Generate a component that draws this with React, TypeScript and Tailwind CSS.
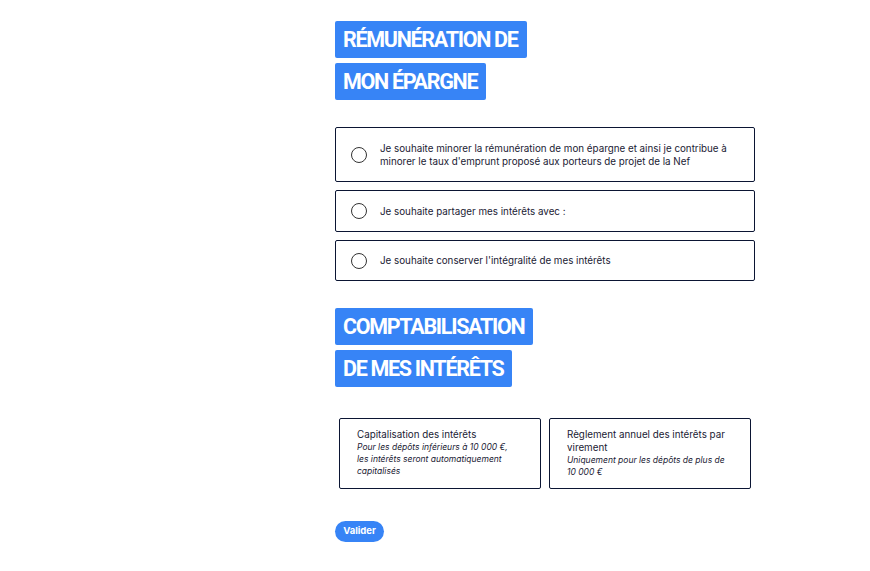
import React from "react";

const blue = "bg-[#3784f6]";

function Heading({ lines }: { lines: string[] }) {
  return (
    <div className="flex flex-col items-start gap-[5px]">
      {lines.map((l) => (
        <div
          key={l}
          className={`${blue} h-[37px] flex items-center pl-[8px] pr-[9px] rounded-[2px] text-white text-[21.5px] font-bold leading-none tracking-[-1.3px] whitespace-nowrap`}
          style={{ fontFamily: 'Roboto, "Liberation Sans", sans-serif' }}
        >
          {l}
        </div>
      ))}
    </div>
  );
}

function Radio({ children, h }: { children: React.ReactNode; h: string }) {
  return (
    <div className={`border border-[#0b1533] rounded-[2px] flex items-center pl-[15px] pr-[10px] ${h}`}>
      <div className="w-[16px] h-[16px] rounded-full border border-[#333] shrink-0" />
      <div className="ml-[13px] text-[9.8px] leading-[13px] text-[#1a1a33] whitespace-nowrap">{children}</div>
    </div>
  );
}

export default function App() {
  return (
    <div className="min-h-[571px] bg-white" style={{ fontFamily: 'Inter, "Liberation Sans", sans-serif' }}>
      <div className="pl-[335px] pt-[21px] w-[755px]">
        <Heading lines={["RÉMUNÉRATION DE", "MON ÉPARGNE"]} />
        <div className="mt-[27px] flex flex-col gap-[8px]">
          <Radio h="h-[55px]">
            Je souhaite minorer la rémunération de mon épargne et ainsi je contribue à
            <br />
            minorer le taux d'emprunt proposé aux porteurs de projet de la Nef
          </Radio>
          <Radio h="h-[42px]">Je souhaite partager mes intérêts avec :</Radio>
          <Radio h="h-[41px]">Je souhaite conserver l'intégralité de mes intérêts</Radio>
        </div>
        <div className="mt-[27px]">
          <Heading lines={["COMPTABILISATION", "DE MES INTÉRÊTS"]} />
        </div>
        <div className="mt-[31px] px-[4px] grid grid-cols-2 gap-[8px]">
          <div className="border border-[#0b1533] rounded-[2px] h-[71px] pl-[17px] pr-[10px] pt-[9px] text-[#1a1a33] whitespace-nowrap">
            <div className="text-[9.8px] leading-[13px]">Capitalisation des intérêts</div>
            <div className="text-[8.5px] leading-[12px] italic">
              Pour les dépôts inférieurs à 10 000 €,
              <br />
              les intérêts seront automatiquement
              <br />
              capitalisés
            </div>
          </div>
          <div className="border border-[#0b1533] rounded-[2px] h-[71px] pl-[17px] pr-[10px] pt-[9px] text-[#1a1a33] whitespace-nowrap">
            <div className="text-[9.8px] leading-[13px]">
              Règlement annuel des intérêts par
              <br />
              virement
            </div>
            <div className="text-[8.5px] leading-[12px] italic">
              Uniquement pour les dépôts de plus de
              <br />
              10 000 €
            </div>
          </div>
        </div>
        <div className="mt-[32px] flex">
          <button className={`${blue} h-[21px] w-[49px] rounded-full text-white text-[9.5px] font-bold`}>
            Valider
          </button>
        </div>
      </div>
    </div>
  );
}
